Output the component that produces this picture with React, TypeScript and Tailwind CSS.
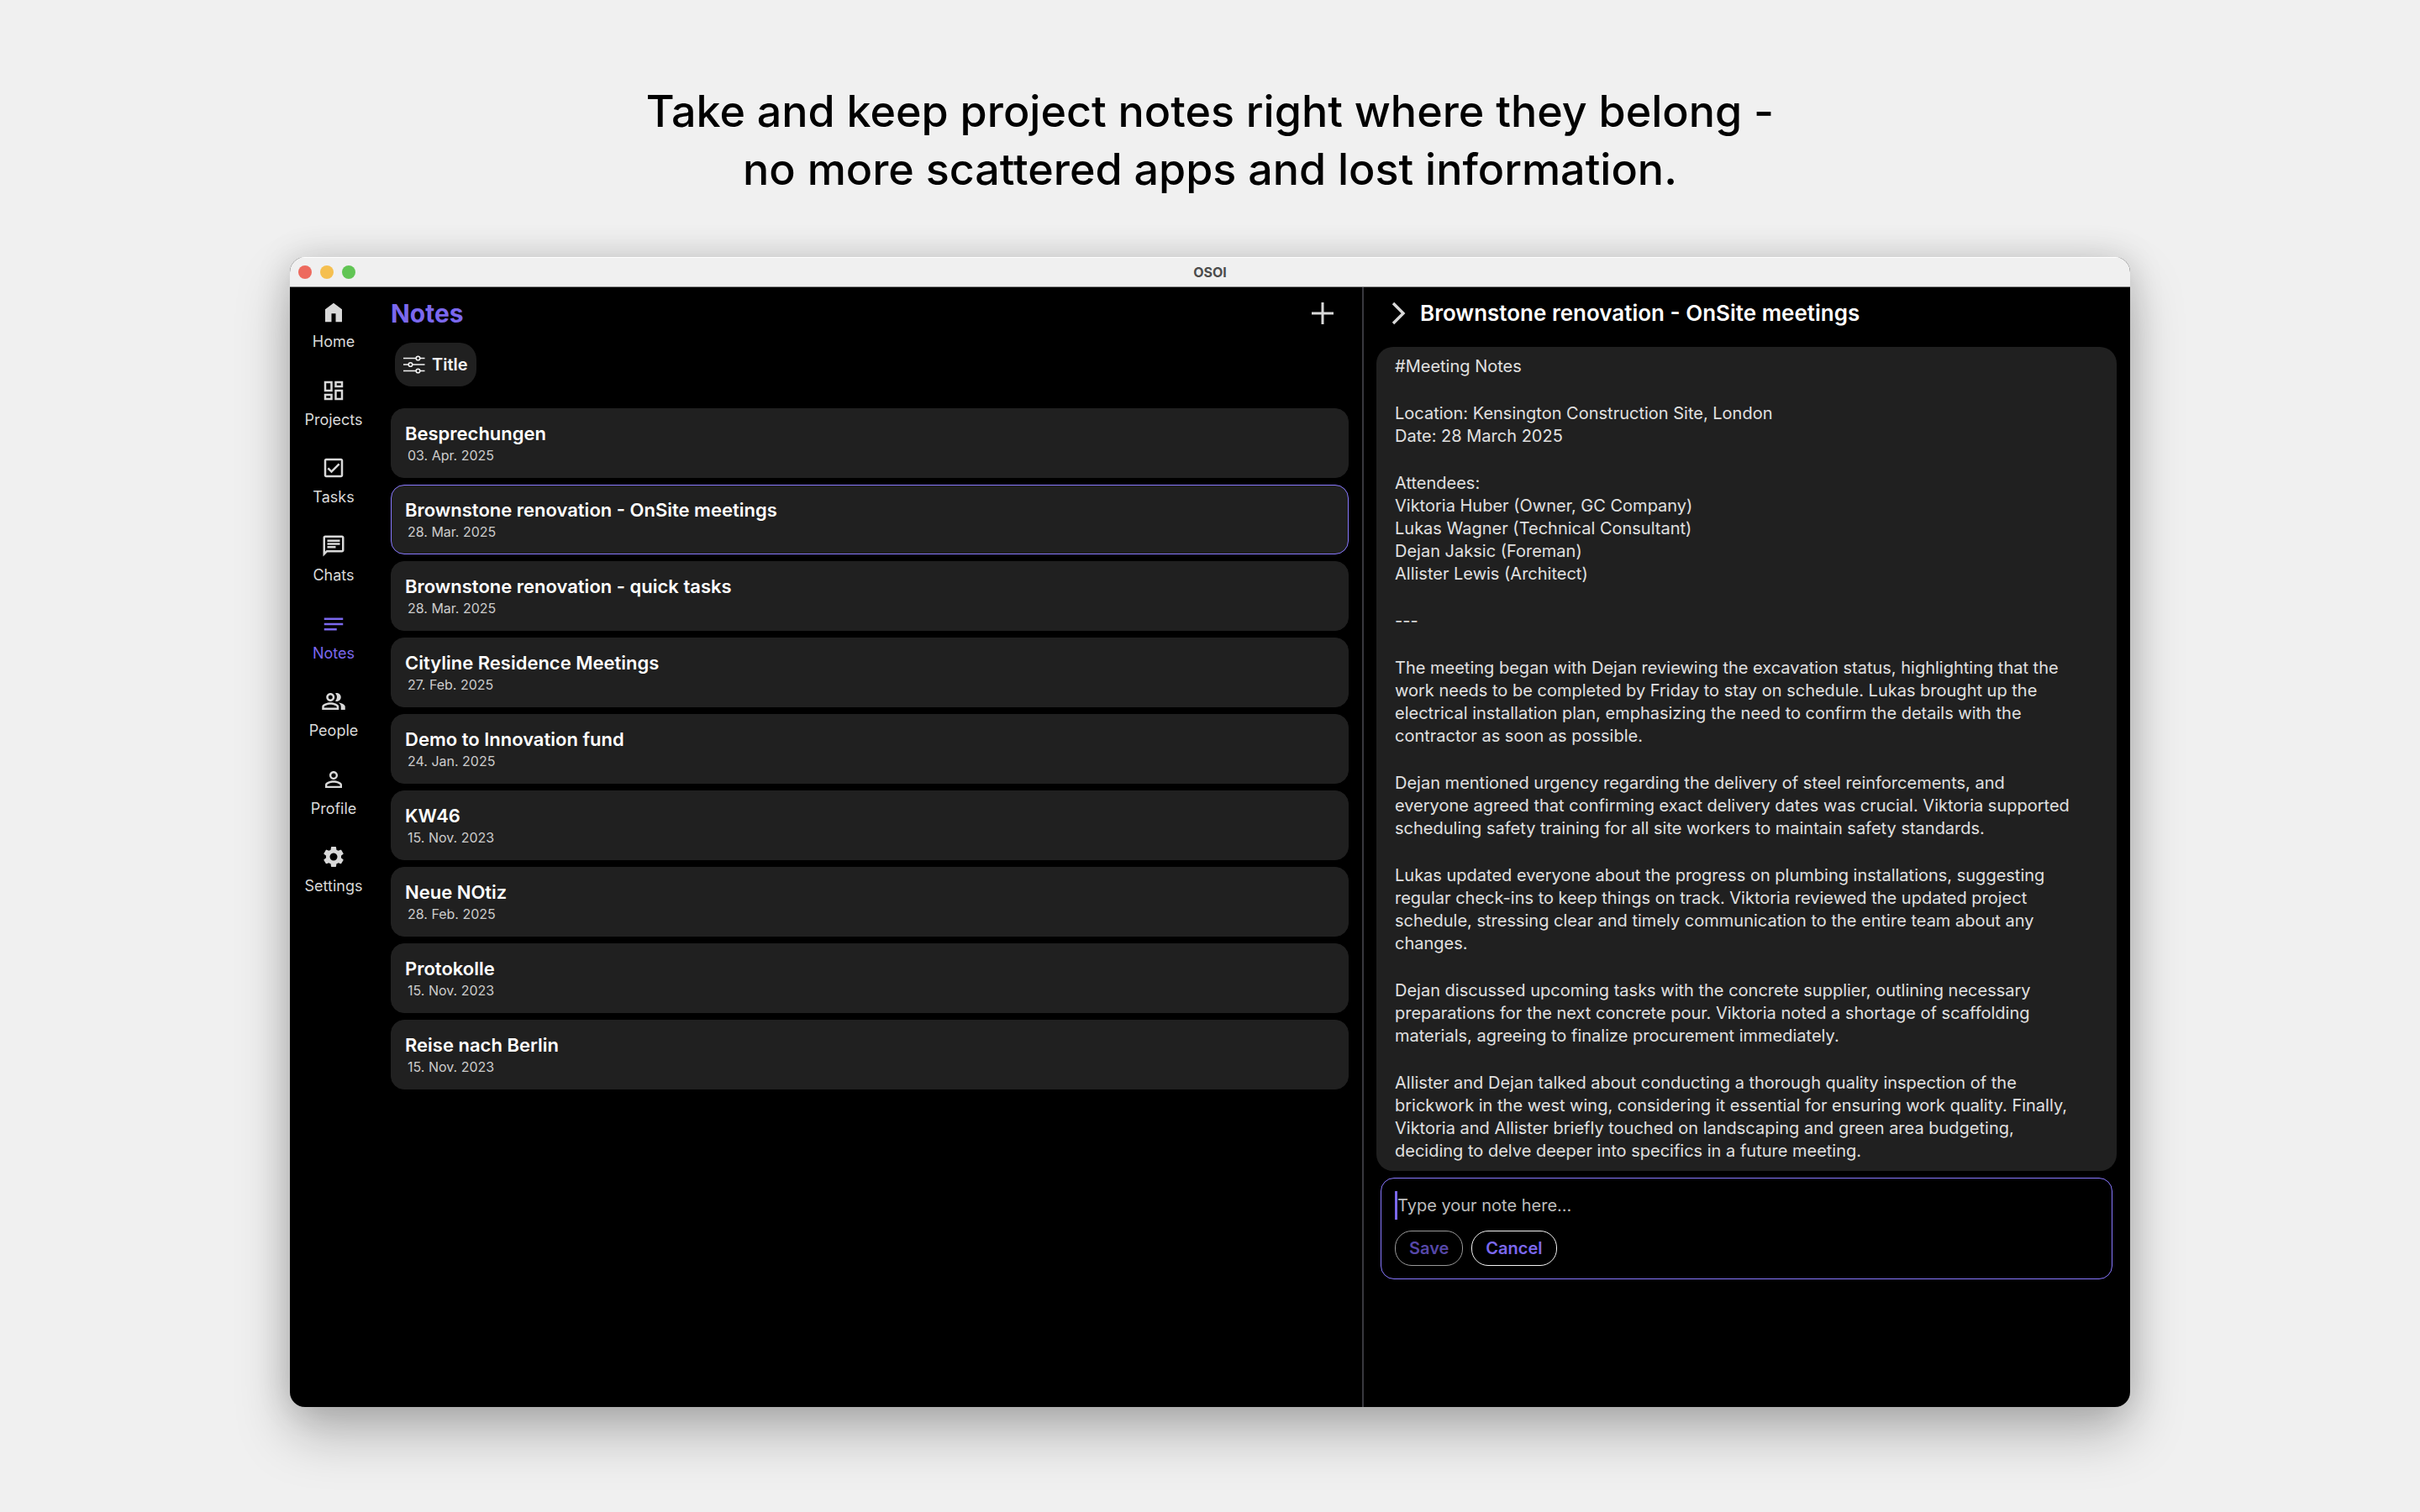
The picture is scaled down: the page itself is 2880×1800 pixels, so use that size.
import React, { useState } from "react";
import {
  MdNotes,
  MdOutlineChat,
  MdOutlineCheckBox,
  MdOutlineDashboard,
  MdOutlinePeopleAlt,
  MdPersonOutline,
  MdSettings,
} from "react-icons/md";

// ------------------------------------
// DATA
// ------------------------------------
const notes = [
  { title: "Besprechungen", date: "03. Apr. 2025" },
  { title: "Brownstone renovation - OnSite meetings", date: "28. Mar. 2025" },
  { title: "Brownstone renovation - quick tasks", date: "28. Mar. 2025" },
  { title: "Cityline Residence Meetings", date: "27. Feb. 2025" },
  { title: "Demo to Innovation fund", date: "24. Jan. 2025" },
  { title: "KW46", date: "15. Nov. 2023" },
  { title: "Neue NOtiz", date: "28. Feb. 2025" },
  { title: "Protokolle", date: "15. Nov. 2023" },
  { title: "Reise nach Berlin", date: "15. Nov. 2023" },
];

const noteBody = [
  "#Meeting Notes",
  "Location: Kensington Construction Site, London\nDate: 28 March 2025",
  "Attendees:\nViktoria Huber (Owner, GC Company)\nLukas Wagner (Technical Consultant)\nDejan Jaksic (Foreman)\nAllister Lewis (Architect)",
  "---",
  "The meeting began with Dejan reviewing the excavation status, highlighting that the\nwork needs to be completed by Friday to stay on schedule. Lukas brought up the\nelectrical installation plan, emphasizing the need to confirm the details with the\ncontractor as soon as possible.",
  "Dejan mentioned urgency regarding the delivery of steel reinforcements, and\neveryone agreed that confirming exact delivery dates was crucial. Viktoria supported\nscheduling safety training for all site workers to maintain safety standards.",
  "Lukas updated everyone about the progress on plumbing installations, suggesting\nregular check-ins to keep things on track. Viktoria reviewed the updated project\nschedule, stressing clear and timely communication to the entire team about any\nchanges.",
  "Dejan discussed upcoming tasks with the concrete supplier, outlining necessary\npreparations for the next concrete pour. Viktoria noted a shortage of scaffolding\nmaterials, agreeing to finalize procurement immediately.",
  "Allister and Dejan talked about conducting a thorough quality inspection of the\nbrickwork in the west wing, considering it essential for ensuring work quality. Finally,\nViktoria and Allister briefly touched on landscaping and green area budgeting,\ndeciding to delve deeper into specifics in a future meeting.",
];

// ------------------------------------
// ICONS
// ------------------------------------
function HomeIcon({ className }: { className?: string }) {
  return (
    <svg viewBox="0 0 24 24" fill="currentColor" className={className}>
      <path d="M4 21V9l8-6 8 6v12h-6v-8h-4v8z" />
    </svg>
  );
}

function SlidersIcon() {
  return (
    <svg viewBox="0 0 26 22" fill="none" stroke="currentColor" strokeWidth="1.6" className="w-[26px] h-[22px]">
      <path d="M0 3.5h15.2M19.8 3.5H25.5M0 11h6.2M10.8 11h14.7M0 18.5h15.2M19.8 18.5H25.5" />
      <circle cx="17.5" cy="3.5" r="2.3" />
      <circle cx="8.5" cy="11" r="2.3" />
      <circle cx="17.5" cy="18.5" r="2.3" />
    </svg>
  );
}

const navItems = [
  { label: "Home", icon: HomeIcon },
  { label: "Projects", icon: MdOutlineDashboard },
  { label: "Tasks", icon: MdOutlineCheckBox },
  { label: "Chats", icon: MdOutlineChat },
  { label: "Notes", icon: MdNotes },
  { label: "People", icon: MdOutlinePeopleAlt },
  { label: "Profile", icon: MdPersonOutline },
  { label: "Settings", icon: MdSettings },
];

// ------------------------------------
// WINDOW PARTS
// ------------------------------------
function TitleBar() {
  return (
    <header className="grid grid-cols-3 items-center h-9 px-[10px] bg-[#f0f0f0] border-y border-t-white border-b-[#8a8a8a]">
      <div className="flex gap-[10px]">
        <span className="size-4 rounded-full bg-[#ed6a5e]" />
        <span className="size-4 rounded-full bg-[#f5bf4f]" />
        <span className="size-4 rounded-full bg-[#61c554]" />
      </div>
      <div className="text-center text-base leading-5 font-bold text-[#4c4c4c]">OSOI</div>
    </header>
  );
}

function Sidebar() {
  return (
    <nav className="w-[104px] shrink-0 h-[743px] grid grid-rows-8 pt-[2px]">
      {navItems.map(({ label, icon: Icon }) => (
        <a
          key={label}
          href="#"
          className={`flex flex-col items-center pt-[13px] gap-2 text-lg leading-6 ${label === "Notes" ? "text-[#7b68ee]" : "text-[#d9d9d9]"}`}
        >
          <Icon className="size-[30px]" />
          {label}
        </a>
      ))}
    </nav>
  );
}

function NoteList({ selected, onSelect }: { selected: number; onSelect: (i: number) => void }) {
  return (
    <section className="flex-1 min-w-0 px-4">
      <div className="flex items-center justify-between h-[62px] pr-[18px]">
        <h2 className="text-3xl leading-9 font-bold text-[#7b68ee]">Notes</h2>
        <button aria-label="Add note" className="text-[#d9d9d9]">
          <svg viewBox="0 0 26 26" fill="none" stroke="currentColor" strokeWidth="3" className="size-[26px]">
            <path d="M13 0v26M0 13h26" />
          </svg>
        </button>
      </div>
      <button className="flex items-center gap-2 h-[52px] mt-1 ml-[5px] px-[10px] rounded-[20px] bg-[#202020] text-[#f2f2f2] text-xl leading-6 font-semibold">
        <SlidersIcon />
        Title
      </button>
      <ul className="flex flex-col gap-2 mt-[26px]">
        {notes.map((note, i) => (
          <li key={note.title}>
            <button
              onClick={() => onSelect(i)}
              className={`block w-full h-[83px] px-4 rounded-2xl border bg-[#202020] text-left ${i === selected ? "border-[#8878ff]" : "border-[#202020]"}`}
            >
              <span className="block text-[22px] leading-7 font-semibold text-white">{note.title}</span>
              <span className="block pl-[3px] text-base leading-6 text-[#cccccc]">{note.date}</span>
            </button>
          </li>
        ))}
      </ul>
    </section>
  );
}

function NoteDetail({ title }: { title: string }) {
  const [draft, setDraft] = useState("");

  return (
    <section className="w-[914px] shrink-0 border-l-2 border-[#38383e] pl-[15px] pr-4">
      <div className="flex items-center gap-4 h-[62px] pl-4">
        <button aria-label="Close note" className="text-[#d9d9d9]">
          <svg viewBox="0 0 20 28" fill="none" stroke="currentColor" strokeWidth="3.4" className="w-5 h-7">
            <path d="M4 2l12 12L4 26" />
          </svg>
        </button>
        <h2 className="text-[26px] leading-8 font-semibold text-white">{title}</h2>
      </div>

      <article className="flex flex-col gap-[29px] mt-[9px] py-[10px] px-[22px] rounded-[20px] bg-[#202020] text-xl leading-[27px] text-[#e0e0e0]">
        {noteBody.map((block) => (
          <p key={block} className="whitespace-pre-line">{block}</p>
        ))}
      </article>

      <form
        onSubmit={(e) => e.preventDefault()}
        className="mt-2 mx-[5px] px-4 py-[15px] rounded-2xl border border-[#8878ff]"
      >
        <div className="flex items-center h-[34px]">
          <span className="w-[3px] h-[34px] bg-[#7b68ee]" />
          <input
            aria-label="Note text"
            value={draft}
            onChange={(e) => setDraft(e.target.value)}
            placeholder="Type your note here..."
            className="flex-1 bg-transparent text-xl leading-7 text-white placeholder:text-[#bdbdbd] outline-none"
          />
        </div>
        <div className="flex gap-[10px] mt-[13px]">
          <button className="h-[42px] px-4 rounded-[20px] border border-[#999999] text-xl leading-6 font-semibold text-[#5647a8]">
            Save
          </button>
          <button type="button" className="h-[42px] px-4 rounded-[20px] border border-[#f2f2f2] text-xl leading-6 font-semibold text-[#7b68ee]">
            Cancel
          </button>
        </div>
      </form>
    </section>
  );
}

export default function App() {
  const [selected, setSelected] = useState(1);

  return (
    <div className="min-h-screen flex flex-col px-[345px] pt-[98px] pb-[125px] bg-[#f0f0f0] font-['Inter',sans-serif]">
      <h1 className="text-center text-[52px] leading-[69px] font-medium text-black">
        Take and keep project notes right where they belong -<br />
        no more scattered apps and lost information.
      </h1>

      <main className="flex-1 flex flex-col mt-[70px] rounded-[18px] overflow-hidden bg-black shadow-[0_0_40px_rgba(0,0,0,0.15),0_32px_64px_rgba(0,0,0,0.25)]">
        <TitleBar />
        <div className="flex-1 flex">
          <Sidebar />
          <NoteList selected={selected} onSelect={setSelected} />
          <NoteDetail title={notes[selected].title} />
        </div>
      </main>
    </div>
  );
}
